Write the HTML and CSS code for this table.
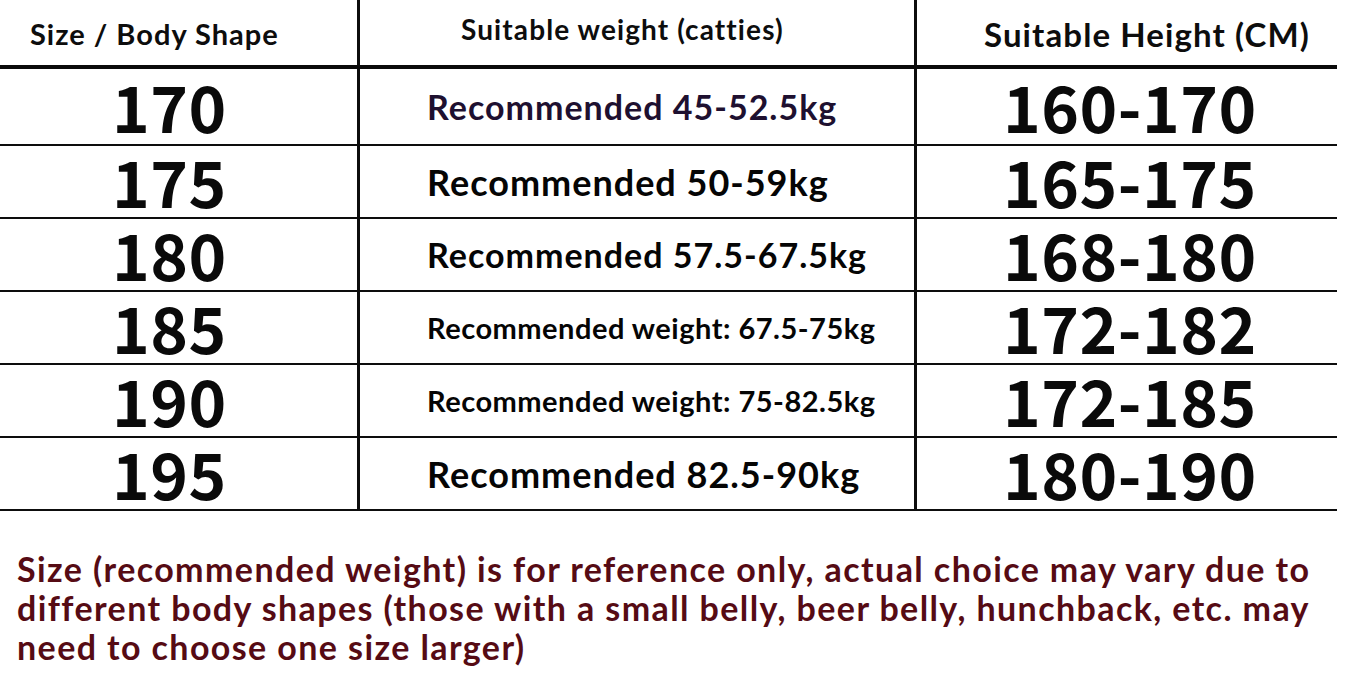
FILE: index.html
```html
<!DOCTYPE html>
<html lang="en">
<head>
<meta charset="utf-8">
<title>Size chart</title>
<link rel="stylesheet" href="styles.css">
</head>
<body>
<main class="page">
  <div class="chart">
    <div class="cell head c1"><span class="h1t">Size / Body Shape</span></div>
    <div class="cell head c2"><span class="h2t">Suitable weight (catties)</span></div>
    <div class="cell head c3"><span class="h3t">Suitable Height (CM)</span></div>

    <div class="cell first c1"><span class="num">170</span></div>
    <div class="cell first c2"><span class="wt wt-mid wt-purple">Recommended 45-52.5kg</span></div>
    <div class="cell first c3"><span class="num">160-170</span></div>

    <div class="cell c1"><span class="num">175</span></div>
    <div class="cell c2"><span class="wt">Recommended 50-59kg</span></div>
    <div class="cell c3"><span class="num">165-175</span></div>

    <div class="cell c1"><span class="num">180</span></div>
    <div class="cell c2"><span class="wt wt-mid">Recommended 57.5-67.5kg</span></div>
    <div class="cell c3"><span class="num">168-180</span></div>

    <div class="cell c1"><span class="num">185</span></div>
    <div class="cell c2"><span class="wt wt-small">Recommended weight: 67.5-75kg</span></div>
    <div class="cell c3"><span class="num">172-182</span></div>

    <div class="cell c1"><span class="num">190</span></div>
    <div class="cell c2"><span class="wt wt-small">Recommended weight: 75-82.5kg</span></div>
    <div class="cell c3"><span class="num">172-185</span></div>

    <div class="cell c1"><span class="num">195</span></div>
    <div class="cell c2"><span class="wt">Recommended 82.5-90kg</span></div>
    <div class="cell c3"><span class="num">180-190</span></div>
  </div>
  <p class="note">Size (recommended weight) is for reference only, actual choice may vary due to different body shapes (those with a small belly, beer belly, hunchback, etc. may need to choose one size larger)</p>
</main>
</body>
</html>
```

FILE: styles.css
```css
html, body {
  margin: 0;
  padding: 0;
  background: #ffffff;
}

.page {
  width: 1368px;
  height: 689px;
  overflow: hidden;
  background: #ffffff;
}

.chart {
  display: grid;
  grid-template-columns: 360px 557px 420px;
  grid-template-rows: 69px 77px repeat(5, 73px);
  width: 1337px;
}

.cell {
  display: flex;
  align-items: center;
  border-bottom: 2px solid #0d0d0d;
  box-sizing: border-box;
  font-family: "Lato", "Liberation Sans", sans-serif;
  font-weight: 700;
  color: #0d0d0d;
  white-space: nowrap;
}

.c1, .c2 {
  border-right: 3px solid #0d0d0d;
}

.head {
  border-bottom: 4px solid #0a0a0a;
}

.c1.head { padding-left: 30px; }
.c2.head { padding-left: 101px; }
.c3.head { padding-left: 67px; }

.h1t {
  font-size: 29px;
  letter-spacing: 1px;
  margin-top: 2px;
}

.h2t {
  font-size: 28px;
  letter-spacing: 1.1px;
  margin-top: -8px;
}

.h3t {
  font-size: 33px;
  letter-spacing: 1.1px;
  margin-top: 2px;
}

.c1:not(.head) { padding-left: 112px; }
.c2:not(.head) { padding-left: 67px; }
.c3:not(.head) { padding-left: 86px; }

.num {
  font-family: "Noto Sans CJK SC", "Noto Sans", sans-serif;
  font-weight: 700;
  font-size: 64px;
  letter-spacing: 0.5px;
  line-height: 1;
  color: #0a0a0a;
  margin-top: -3px;
}

.wt {
  font-size: 36px;
  letter-spacing: 1px;
  line-height: 1;
  color: #050505;
}

.wt-mid {
  font-size: 34px;
}

.wt-purple {
  color: #1e1030;
}

.wt-small {
  font-size: 29px;
  letter-spacing: 0.5px;
}

.note {
  margin: 38px 0 0 17px;
  width: 1335px;
  font-family: "Lato", "Liberation Sans", sans-serif;
  font-weight: 700;
  font-size: 34px;
  letter-spacing: 1.4px;
  line-height: 39px;
  color: #560b14;
}
```
